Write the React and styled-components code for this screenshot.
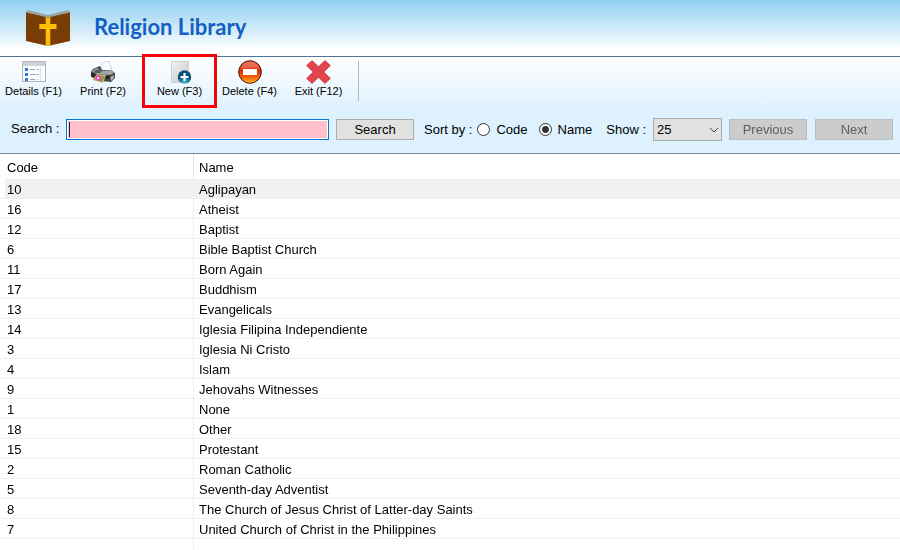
import React, { useState } from "react";
import styled, { createGlobalStyle } from "styled-components";

const GlobalStyle = createGlobalStyle`
  * { box-sizing: border-box; }
  body {
    margin: 0;
    background: #fff;
    color: #000;
    font: 13px/20px "Liberation Sans", Arial, sans-serif;
  }
  button, input, select { font: inherit; color: inherit; }
`;

const Page = styled.main`
  min-height: 100vh;
  display: flex;
  flex-direction: column;
`;

const Header = styled.header`
  display: flex;
  align-items: center;
  gap: 24px;
  height: 57px;
  padding: 0 26px;
  background: linear-gradient(#90cff0, #fff 90%);
  border-bottom: 1px solid #4f7396;
`;

const Title = styled.h1`
  margin: 0;
  padding-bottom: 2px;
  color: #1260c4;
  font: bold 22px/32px Lato, sans-serif;
`;

const Controls = styled.section`
  background: linear-gradient(#fff, #def1fe 52px);
  border-bottom: 1px solid #7c8792;
`;

const Toolbar = styled.nav`
  display: flex;
  height: 48px;
`;

const Tool = styled.button`
  display: flex;
  flex-direction: column;
  align-items: center;
  width: ${(p) => p.$width}px;
  height: 48px;
  margin-left: ${(p) => (p.$marked ? 6 : 0)}px;
  padding: 3px 0 0;
  border: 0;
  background: none;
  font-size: 11px;
  line-height: 14px;
  white-space: nowrap;
  outline: ${(p) => (p.$marked ? "3px solid #fb0007" : "none")};
`;

const Divider = styled.span`
  width: 1px;
  height: 40px;
  margin: 4px 0 0 6px;
  background: #b4bac0;
`;

const Filters = styled.form`
  display: flex;
  align-items: center;
  height: 48px;
  padding: 0 7px 0 11px;
`;

const SearchLabel = styled.label`
  display: flex;
  align-items: center;
  gap: 7px;
  flex: 1;
  min-width: 0;
`;

const SearchInput = styled.input`
  flex: 1;
  min-width: 0;
  height: 21px;
  padding: 0 2px;
  border: 1px solid #0078d7;
  border-radius: 0;
  background: #ffc0cb;
  box-shadow: inset 0 0 0 1px #fff;
  outline: none;
  &:focus:placeholder-shown {
    caret-color: transparent;
    background: linear-gradient(#222, #222) 2px center / 1px 15px no-repeat #ffc0cb;
  }
`;

const Button = styled.button`
  width: 78px;
  height: 21px;
  margin-left: ${(p) => p.$gap}px;
  padding: 1px 0 0;
  border: 1px solid #adadad;
  background: #e1e1e1;
  line-height: 18px;
  &:disabled {
    border-color: #bfbfbf;
    background: #ccc;
    color: #606060;
  }
`;

const SortGroup = styled.div`
  display: flex;
  align-items: center;
  gap: 5px;
  margin-left: 10px;
  padding-top: 1px;
`;

const RadioLabel = styled.label`
  display: flex;
  align-items: center;
  gap: 6px;
  & + & { margin-left: 6px; }
`;

const Radio = styled.input`
  appearance: none;
  width: 13px;
  height: 13px;
  margin: 0;
  border: 1px solid #333;
  border-radius: 50%;
  background: #fff;
  &:checked { background: radial-gradient(circle, #333 3px, #fff 4px); }
`;

const ShowLabel = styled.label`
  display: flex;
  align-items: center;
  gap: 7px;
  margin-left: 14px;
  padding-top: 1px;
`;

const SelectBox = styled.span`
  display: grid;
  align-items: center;
  width: 69px;
  & > * { grid-area: 1 / 1; }
  & > svg { justify-self: end; margin-right: 3px; pointer-events: none; }
`;

const Select = styled.select`
  appearance: none;
  height: 23px;
  padding: 0 3px;
  border: 1px solid #adadad;
  border-radius: 0;
  background: #e1e1e1;
`;

const Table = styled.table`
  width: 100%;
  table-layout: fixed;
  border-collapse: separate;
  border-spacing: 0;
`;

const CodeCol = styled.col`
  width: 194px;
`;

const HeadCell = styled.th`
  height: 25px;
  padding: 3px 0 0 ${(p) => (p.$first ? 7 : 5)}px;
  border-right: ${(p) => (p.$first ? "1px solid #e5e5e5" : "0")};
  font-weight: normal;
  text-align: left;
`;

const Cell = styled.td`
  height: 20px;
  padding: 3px 0 0 ${(p) => (p.$first ? 7 : 5)}px;
  line-height: 16px;
  border-bottom: 1px solid #efefef;
  border-right: ${(p) => (p.$first ? "1px solid #efefef" : "0")};
`;

const Row = styled.tr`
  background: ${(p) => (p.$selected ? "#f0f0f0" : "#fff")};
  & > td:first-child {
    background: ${(p) => (p.$selected ? "linear-gradient(90deg, #fff 5px, #f0f0f0 5px)" : "none")};
  }
`;

const TableFill = styled.div`
  flex: 1;
  width: 194px;
  border-right: 1px solid #efefef;
`;

const BookIcon = () => (
  <svg width="44" height="37" viewBox="0 0 44 37" aria-hidden="true">
    <path d="M0 2 2 0 22 5 42 0 44 2V6L22 11 0 6Z" fill="#9aa3aa" />
    <path d="M0 2.500 22 7.500V36L0 31ZM44 2.500 22 7.500V36L44 31Z" fill="#783c04" />
    <path d="M19.700 7 22 7.500 24.300 7V14H30.500V19H24.300V35.500L22 36 19.700 35.500V19H13.300V14H19.700Z" fill="#ffbf00" />
  </svg>
);

const DetailsIcon = () => (
  <svg width="25" height="24" viewBox="-1 0 25 24" aria-hidden="true">
    <rect x=".5" y="1.500" width="23" height="20" fill="#fafbfc" stroke="#b0b4b9" />
    <path d="M1 2H23V6H1Z" fill="#d3d6da" />
    <path d="M3 4H6M14 4H16M17 4H19M20 4H22" stroke="#b0b5bc" />
    <path d="M3 8H6V11H3ZM3 13H6V16H3ZM3 18H6V21H3Z" fill="#2f78dc" />
    <path d="M8 9.500H13M8 14.500H14M8 19.500H13M15 9.500H17M15 14.500H17M15 19.500H16" stroke="#a2a8b0" />
    <path d="M18.500 7V21" stroke="#e0e3e6" />
  </svg>
);

const PrinterIcon = () => (
  <svg width="24" height="24" viewBox="0 0 24 24" aria-hidden="true">
    <path d="M10 3 18 1 21 10 12 12Z" fill="#f7faff" stroke="#c5ccd5" strokeWidth=".7" />
    <path d="M2 9 9 6 11 10H20L24 13V18L20 22 10 21 0 17V12Z" fill="#47474b" />
    <path d="M1 11 6 8 11 11 20 10 23 13 19 15 5 14Z" fill="#a3a3a8" />
    <path d="M0 13 5 14 20 16 19 19 5 18 0 16Z" fill="#252528" />
    <path d="M3 11 8 9 11 11 9 13 4 13Z" fill="#5c5c60" />
    <path d="M6 14 15 15 12 23 1 20Z" fill="#c9c480" />
    <path d="M6 15 14 16 11 22 3 19Z" fill="#8f963f" />
    <circle cx="7" cy="18" r="2.800" fill="#f04fb2" />
    <circle cx="7" cy="18" r="1" fill="#fff0f8" />
    <path d="M19 17 23 15V18L20 21Z" fill="#aaa9ad" />
  </svg>
);

const NewIcon = () => (
  <svg width="25" height="24" viewBox="0 0 25 24" aria-hidden="true">
    <defs>
      <linearGradient id="paper" x2="1" y2="1"><stop stopColor="#f4f4f4" /><stop offset="1" stopColor="#c4c4c4" /></linearGradient>
      <radialGradient id="blue" cx=".5" cy=".9"><stop stopColor="#38c0dc" /><stop offset="1" stopColor="#085078" /></radialGradient>
    </defs>
    <path d="M4.500 1.500H21.500V22.500H4.500Z" fill="url(#paper)" stroke="#d0d0d0" />
    <circle cx="17.500" cy="17" r="6.700" fill="url(#blue)" />
    <path d="M17.500 13V21M13.500 17H21.500" stroke="#fff" strokeWidth="2.200" />
  </svg>
);

const DeleteIcon = () => (
  <svg width="25" height="24" viewBox="-1 0 25 24" aria-hidden="true">
    <defs><linearGradient id="red" x2="0" y2="1"><stop stopColor="#e75b3a" /><stop offset=".45" stopColor="#e22c05" /><stop offset=".75" stopColor="#f4660c" /><stop offset="1" stopColor="#ffc02d" /></linearGradient></defs>
    <circle cx="12" cy="12" r="11.300" fill="url(#red)" stroke="#511105" />
    <path d="M3 9Q4 2 12 2T21 9Q12 6 3 9Z" fill="#fff" opacity=".2" />
    <rect x="5" y="9" width="14" height="6" fill="#fff" />
  </svg>
);

const ExitIcon = () => (
  <svg width="25" height="24" viewBox="0 0 25 24" aria-hidden="true">
    <path d="M6 .5 12.500 6.500 19 .5 24.500 5.500 18 12 24.500 18.500 19 23.500 12.500 17.500 6 23.500.5 18.500 7 12 .5 5.500Z" fill="#e0454d" stroke="#d43c44" strokeWidth=".7" strokeLinejoin="round" />
  </svg>
);

const tools = [
  ["Details (F1)", DetailsIcon, 67],
  ["Print (F2)", PrinterIcon, 72],
  ["New (F3)", NewIcon, 69],
  ["Delete (F4)", DeleteIcon, 71],
  ["Exit (F12)", ExitIcon, 67],
];

const religions = [
  [10, "Aglipayan"], [16, "Atheist"], [12, "Baptist"], [6, "Bible Baptist Church"],
  [11, "Born Again"], [17, "Buddhism"], [13, "Evangelicals"],
  [14, "Iglesia Filipina Independiente"], [3, "Iglesia Ni Cristo"], [4, "Islam"],
  [9, "Jehovahs Witnesses"], [1, "None"], [18, "Other"], [15, "Protestant"],
  [2, "Roman Catholic"], [5, "Seventh-day Adventist"],
  [8, "The Church of Jesus Christ of Latter-day Saints"],
  [7, "United Church of Christ in the Philippines"],
];

export default function App() {
  const [sort, setSort] = useState("Name");
  return (
    <Page>
      <GlobalStyle />
      <Header><BookIcon /><Title>Religion Library</Title></Header>
      <Controls>
        <Toolbar aria-label="Library actions">
          {tools.map(([label, Icon, width]) => (
            <Tool key={label} type="button" $width={width} $marked={label === "New (F3)"}><Icon />{label}</Tool>
          ))}
          <Divider />
        </Toolbar>
        <Filters onSubmit={(e) => e.preventDefault()}>
          <SearchLabel>Search :<SearchInput type="text" placeholder=" " autoFocus /></SearchLabel>
          <Button type="submit" $gap={7}>Search</Button>
          <SortGroup role="radiogroup" aria-label="Sort by">
            <span>Sort by :</span>
            {["Code", "Name"].map((name) => (
              <RadioLabel key={name}>
                <Radio type="radio" name="sort" checked={sort === name} onChange={() => setSort(name)} />{name}
              </RadioLabel>
            ))}
          </SortGroup>
          <ShowLabel>
            Show :
            <SelectBox>
              <Select defaultValue="25"><option>25</option><option>50</option><option>100</option></Select>
              <svg width="10" height="6" viewBox="0 0 10 6" aria-hidden="true"><path d="M1 1 5 5 9 1" fill="none" stroke="#444" /></svg>
            </SelectBox>
          </ShowLabel>
          <Button type="button" disabled $gap={7}>Previous</Button>
          <Button type="button" disabled $gap={8}>Next</Button>
        </Filters>
      </Controls>
      <Table>
        <colgroup><CodeCol /><col /></colgroup>
        <thead><tr><HeadCell $first>Code</HeadCell><HeadCell>Name</HeadCell></tr></thead>
        <tbody>
          {religions.map(([code, name], i) => (
            <Row key={code} $selected={i === 0}><Cell $first>{code}</Cell><Cell>{name}</Cell></Row>
          ))}
        </tbody>
      </Table>
      <TableFill />
    </Page>
  );
}
